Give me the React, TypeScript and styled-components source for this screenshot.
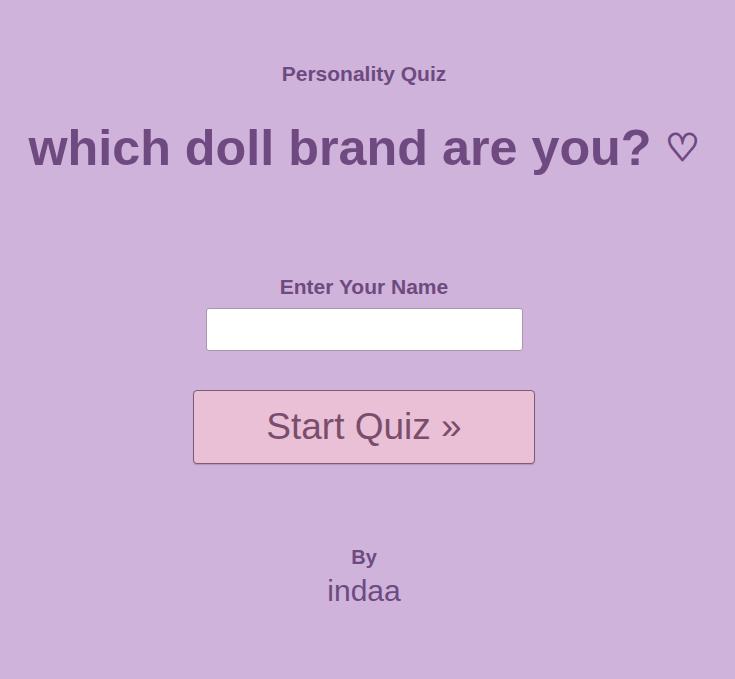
import React from 'react';
import styled, { createGlobalStyle } from 'styled-components';

const GlobalStyle = createGlobalStyle`
  html, body {
    margin: 0;
    padding: 0;
    background-color: #cfb3db;
  }
  body {
    font-family: 'Liberation Sans', Arial, sans-serif;
    color: #6e4a80;
  }
`;

const Page = styled.div`
  align-items: center;
  box-sizing: border-box;
  display: flex;
  flex-direction: column;
  min-height: 679px;
  padding-right: 7px;
  text-align: center;
`;

const Kicker = styled.div`
  font-size: 21px;
  font-weight: 700;
  margin-top: 62px;
`;

const Title = styled.h1`
  font-size: 50.3px;
  font-weight: 700;
  margin: 32px 0 0;
`;

const Heart = styled.span`
  -webkit-text-stroke: 1.6px currentColor;
  font-family: 'DejaVu Sans', sans-serif;
  font-size: 38px;
  font-weight: 700;
  vertical-align: 4px;
`;

const Form = styled.form`
  align-items: center;
  display: flex;
  flex-direction: column;
  margin-top: 98px;
`;

const Label = styled.label`
  font-size: 21px;
  font-weight: 700;
`;

const NameInput = styled.input`
  background: #fff;
  border: 1px solid #a996ab;
  border-radius: 3px;
  box-sizing: border-box;
  height: 43px;
  margin-top: 9px;
  width: 317px;
`;

const StartButton = styled.button`
  background-color: #e9c0d6;
  border: 1px solid #7d5d72;
  border-radius: 4px;
  box-shadow: 0 1px 1px rgba(90, 60, 90, 0.25);
  box-sizing: border-box;
  color: #7b4d6c;
  cursor: pointer;
  font-family: 'Liberation Sans', Arial, sans-serif;
  font-size: 37px;
  height: 74px;
  margin-top: 39px;
  width: 342px;
`;

const Credit = styled.div`
  margin-top: 82px;
`;

const ByLabel = styled.div`
  font-size: 20px;
  font-weight: 700;
`;

const Author = styled.div`
  font-size: 30px;
  margin-top: 5px;
`;

const App: React.FC = () => (
  <Page>
    <GlobalStyle />
    <Kicker>Personality Quiz</Kicker>
    <Title>
      which doll brand are you? <Heart>♡</Heart>
    </Title>
    <Form onSubmit={(e) => e.preventDefault()}>
      <Label htmlFor="name">Enter Your Name</Label>
      <NameInput id="name" type="text" />
      <StartButton type="submit">Start Quiz »</StartButton>
    </Form>
    <Credit>
      <ByLabel>By</ByLabel>
      <Author>indaa</Author>
    </Credit>
  </Page>
);

export default App;
